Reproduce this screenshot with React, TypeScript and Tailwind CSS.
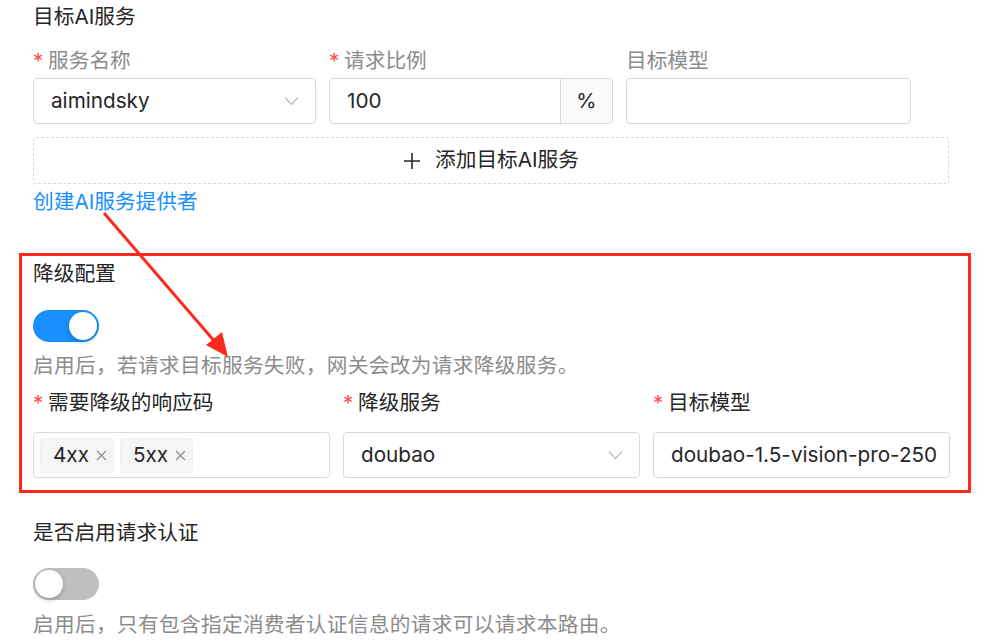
import React from "react";

const Chevron = () => (
  <svg width="15" height="10" viewBox="0 0 15 10" fill="none">
    <polyline points="1,1.5 7.5,8.5 14,1.5" stroke="#bfbfbf" strokeWidth="1.3" />
  </svg>
);

const Req = () => (
  <span className="inline-block w-[15px] text-[#ff4d4f]">*</span>
);

const Label = ({ text, required, muted }: { text: string; required?: boolean; muted?: boolean }) => (
  <div className={`flex h-[34px] items-center ${muted ? "text-[#8c8c8c]" : "text-[#262626]"}`}>
    {required && <Req />}
    <span>{text}</span>
  </div>
);

const Toggle = ({ on }: { on?: boolean }) => (
  <div
    className={`flex h-[32px] w-[66px] items-center rounded-full px-[2px] ${
      on ? "justify-end bg-[#1890ff]" : "justify-start bg-[#bfbfbf]"
    }`}>
    <div className="h-[28px] w-[28px] rounded-full bg-white shadow-[0_2px_4px_rgba(0,35,11,0.25)]" />
  </div>
);

const Tag = ({ text }: { text: string }) => (
  <div className="flex h-[35px] items-center gap-[7px] rounded-[3px] border border-[#f0f0f0] bg-[#f5f5f5] pl-[12px] pr-[6px] text-[#262626]">
    <span>{text}</span>
    <svg width="11" height="11" viewBox="0 0 11 11">
      <path d="M1 1 L10 10 M10 1 L1 10" stroke="#8c8c8c" strokeWidth="1.2" />
    </svg>
  </div>
);

export default function App() {
  return (
    <div className="relative h-[642px] w-[986px] overflow-hidden bg-white font-['Inter','Noto_Sans_CJK_SC',sans-serif] text-[20.7px] leading-none text-[#262626]">
      <div className="box-content flex w-[916px] flex-col pl-[33px]">
        <div className="flex h-[34px] items-center">目标AI服务</div>

        <div className="mt-[10px] flex gap-[13px]">
          <div className="w-[283px]">
            <Label text="服务名称" required muted />
          </div>
          <div className="w-[284px]">
            <Label text="请求比例" required muted />
          </div>
          <div className="w-[285px]">
            <Label text="目标模型" muted />
          </div>
        </div>

        <div className="flex gap-[13px]">
          <div className="flex h-[46px] w-[283px] items-center justify-between rounded-[4px] border border-[#d9d9d9] pl-[17px] pr-[16px]">
            <span>aimindsky</span>
            <Chevron />
          </div>
          <div className="flex h-[46px] w-[284px] rounded-[4px] border border-[#d9d9d9]">
            <div className="flex flex-1 items-center pl-[17px]">100</div>
            <div className="flex w-[52px] items-center justify-center rounded-r-[4px] border-l border-[#d9d9d9] bg-[#fafafa]">
              %
            </div>
          </div>
          <div className="h-[46px] w-[285px] rounded-[4px] border border-[#d9d9d9]" />
        </div>

        <div className="mt-[13px] flex h-[47px] items-center justify-center gap-[14px] rounded-[3px] border border-dashed border-[#d9d9d9]">
          <svg width="18" height="18" viewBox="0 0 18 18">
            <path d="M9 1 V17 M1 9 H17" stroke="#262626" strokeWidth="1.6" />
          </svg>
          <span>添加目标AI服务</span>
        </div>

        <div className="flex h-[36px] items-center text-[#1890ff]">创建AI服务提供者</div>

        <div className="-ml-[14px] mt-[33px] flex w-[952px] flex-col border-[3px] border-[#fc2a1c] pb-[12px] pl-[11px] pt-[1px]">
          <div className="flex h-[34px] items-center">降级配置</div>
          <div className="mt-[19px]">
            <Toggle on />
          </div>
          <div className="mt-[8px] flex h-[32px] items-center tracking-[0.3px] text-[#8c8c8c]">
            启用后，若请求目标服务失败，网关会改为请求降级服务。
          </div>
          <div className="mt-[4px] flex gap-[13px]">
            <div className="w-[297px]">
              <Label text="需要降级的响应码" required />
            </div>
            <div className="w-[297px]">
              <Label text="降级服务" required />
            </div>
            <div className="w-[297px]">
              <Label text="目标模型" required />
            </div>
          </div>
          <div className="mt-[12px] flex gap-[13px]">
            <div className="flex h-[46px] w-[297px] items-center gap-[6px] rounded-[4px] border border-[#d9d9d9] pl-[6px]">
              <Tag text="4xx" />
              <Tag text="5xx" />
            </div>
            <div className="flex h-[46px] w-[297px] items-center justify-between rounded-[4px] border border-[#d9d9d9] pl-[17px] pr-[16px]">
              <span>doubao</span>
              <Chevron />
            </div>
            <div className="flex h-[46px] w-[297px] items-center overflow-hidden whitespace-nowrap rounded-[4px] border border-[#d9d9d9] pl-[17px]">
              doubao-1.5-vision-pro-250
            </div>
          </div>
        </div>

        <div className="mt-[23px] flex h-[34px] items-center">是否启用请求认证</div>
        <div className="mt-[18px]">
          <Toggle />
        </div>
        <div className="mt-[9px] flex h-[32px] items-center tracking-[0.3px] text-[#8c8c8c]">
          启用后，只有包含指定消费者认证信息的请求可以请求本路由。
        </div>
      </div>

      <svg className="pointer-events-none absolute left-0 top-0" width="986" height="642" viewBox="0 0 986 642">
        <line x1="104" y1="213" x2="222" y2="350" stroke="#fc2a1c" strokeWidth="3" />
        <polygon points="228,357 206,345 222,332" fill="#fc2a1c" />
      </svg>
    </div>
  );
}
